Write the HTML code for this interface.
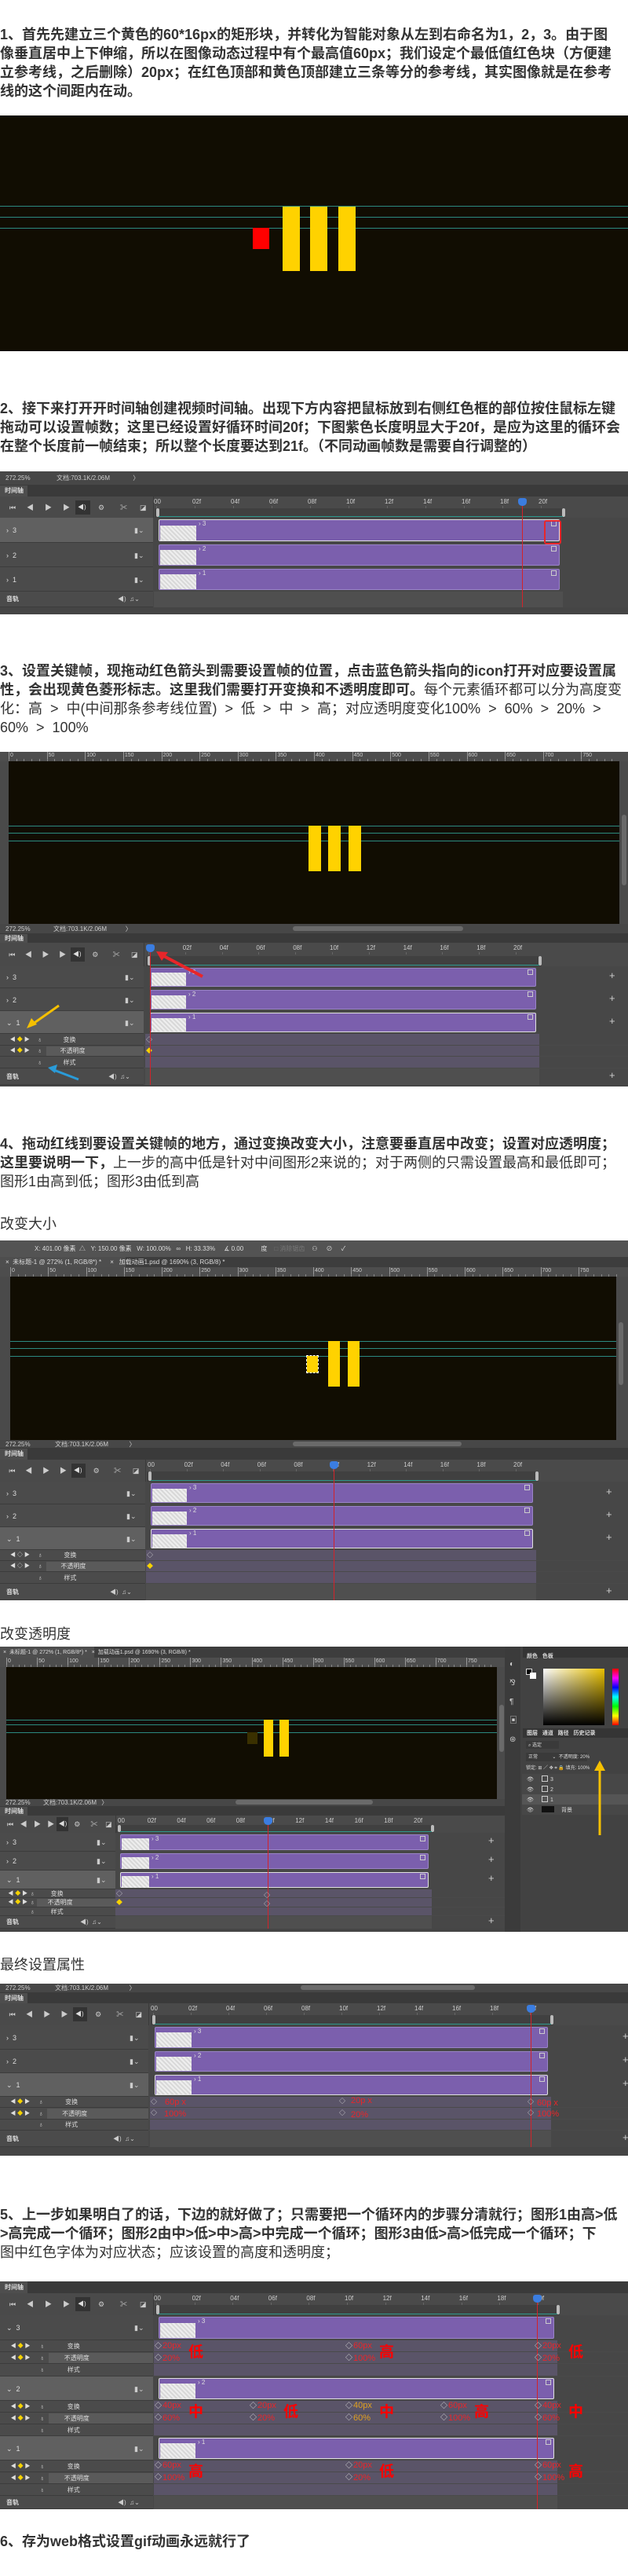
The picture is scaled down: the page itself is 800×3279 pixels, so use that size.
<!DOCTYPE html>
<html><head><meta charset="utf-8">
<style>
*{margin:0;padding:0;box-sizing:border-box}
body{width:800px;height:3279px;background:#fff;position:relative;overflow:hidden;font-family:"Liberation Sans","Noto Sans CJK SC",sans-serif}
.p{position:absolute;left:0;width:800px;font-size:18px;line-height:24px;color:#333;white-space:nowrap;letter-spacing:0}
.b{font-weight:bold}
.n{font-weight:normal}
.blk{position:absolute;overflow:hidden}
.t{position:absolute;font-size:8px;line-height:10px;color:#ddd;white-space:nowrap;font-family:"Liberation Sans","Noto Sans CJK SC",sans-serif}
.r{position:absolute;color:#e8262a;font-size:11px;line-height:12px;white-space:nowrap;font-family:"Liberation Sans","Noto Sans CJK SC",sans-serif}
.R{position:absolute;color:#ff0000;font-size:19px;font-weight:bold;line-height:20px;font-family:"Liberation Sans","Noto Sans CJK SC",sans-serif}
</style></head><body>

<div class="p b" style="top:32px">1、首先先建立三个黄色的60*16px的矩形块，并转化为智能对象从左到右命名为1，2，3。由于图<br>像垂直居中上下伸缩，所以在图像动态过程中有个最高值60px；我们设定个最低值红色块（方便建<br>立参考线，之后删除）20px；在红色顶部和黄色顶部建立三条等分的参考线，其实图像就是在参考<br>线的这个间距内在动。</div>

<div class="blk" style="top:147px;left:0;width:800px;height:300px;background:#110d02">
 <div style="position:absolute;left:0;top:115px;width:800px;height:1px;background:#2c8a80"></div>
 <div style="position:absolute;left:0;top:129px;width:800px;height:1px;background:#2c8a80"></div>
 <div style="position:absolute;left:0;top:143px;width:800px;height:1px;background:#2c8a80"></div>
 <div style="position:absolute;left:360px;top:116px;width:22px;height:82px;background:#ffd200"></div>
 <div style="position:absolute;left:395px;top:116px;width:22px;height:82px;background:#ffd200"></div>
 <div style="position:absolute;left:431px;top:116px;width:22px;height:82px;background:#ffd200"></div>
 <div style="position:absolute;left:322px;top:143px;width:21px;height:27px;background:#ff0000"></div>
</div>

<div class="p b" style="top:508px">2、接下来打开开时间轴创建视频时间轴。出现下方内容把鼠标放到右侧红色框的部位按住鼠标左键<br>拖动可以设置帧数；这里已经设置好循环时间20f；下图紫色长度明显大于20f，是应为这里的循环会<br>在整个长度前一帧结束；所以整个长度要达到21f。（不同动画帧数是需要自行调整的）</div>

<div class="p" style="top:842px"><span class="b">3、设置关键帧，现拖动红色箭头到需要设置帧的位置，点击蓝色箭头指向的icon打开对应要设置属<br>性，会出现黄色菱形标志。这里我们需要打开变换和不透明度即可。</span>每个元素循环都可以分为高度变<br>化：高 &nbsp;&gt;&nbsp; 中(中间那条参考线位置) &nbsp;&gt;&nbsp; 低 &nbsp;&gt;&nbsp; 中 &nbsp;&gt;&nbsp; 高；对应透明度变化100% &nbsp;&gt;&nbsp; 60% &nbsp;&gt;&nbsp; 20% &nbsp;&gt;<br>60% &nbsp;&gt;&nbsp; 100%</div>

<div class="p" style="top:1444px"><span class="b">4、拖动红线到要设置关键帧的地方，通过变换改变大小，注意要垂直居中改变；设置对应透明度；<br>这里要说明一下，</span>上一步的高中低是针对中间图形2来说的；对于两侧的只需设置最高和最低即可；<br>图形1由高到低；图形3由低到高</div>

<div class="p" style="top:1546px">改变大小</div>
<div class="p" style="top:2068px">改变透明度</div>
<div class="p" style="top:2489px">最终设置属性</div>

<div class="p" style="top:2807px"><span class="b">5、上一步如果明白了的话，下边的就好做了；只需要把一个循环内的步骤分清就行；图形1由高&gt;低<br>&gt;高完成一个循环；图形2由中&gt;低&gt;中&gt;高&gt;中完成一个循环；图形3由低&gt;高&gt;低完成一个循环；下<br></span>图中红色字体为对应状态；应该设置的高度和透明度；</div>

<div class="p b" style="top:3223px">6、存为web格式设置gif动画永远就行了</div>

<div id="root"></div>

<script>
const root=document.getElementById('root');
const box=(x,y,w,h,bg,ex='')=>`<div style="position:absolute;left:${x}px;top:${y}px;width:${w}px;height:${h}px;background:${bg};${ex}"></div>`;
const tx=(x,y,s,st='')=>`<div class="t" style="left:${x}px;top:${y}px;${st}">${s}</div>`;

function TL(top,o){
  const W=o.w||800,L=o.L;let h='',y=0;
  h+=box(0,0,W,o.H,'#454545');
  if(o.status){h+=box(0,0,W,o.status,'#474747');h+=box(0,o.status-1,W,1,'#3a3a3a');
    const ty=Math.max(0,o.status/2-5);
    h+=tx(7,ty,'272.25%','color:#ccc')+tx(o.docX||72,ty,'文档:703.1K/2.06M','color:#ccc')+tx((o.docX||72)*2.35,ty,'〉','color:#ccc');
    if(o.scroll)h+=box(o.scroll[0],ty+1,o.scroll[1]-o.scroll[0],6,'#6a6a6a','border-radius:3px');
    y+=o.status;}
  h+=box(0,y,W,o.tab,'#3a3a3a')+box(0,y,35,o.tab,'#4e4e4e')+tx(6,y+o.tab/2-5,'时间轴','font-weight:bold');
  y+=o.tab;const cy=y,ch=o.ctrl;
  h+=box(0,cy,W,ch,'#4a4a4a');
  const s=L/195;const ic=['⏮','◀','▶','▶','','⚙','✂','◪'];const ix=[12,34,57,80,0,125,153,178];
  h+=box(96*s,cy+ch/2-9,19*s,18,'#333')+tx(99*s,cy+ch/2-5,'◀)','font-size:8px');
  ic.forEach((c,i)=>{if(c)h+=tx(ix[i]*s,cy+ch/2-5,c,'font-size:9px;color:#ccc')});
  h+=box(L,cy,1,ch,'#3a3a3a');
  const labs=['00','02f','04f','06f','08f','10f','12f','14f','16f','18f','20f'];
  labs.forEach((l,i)=>{const x=o.r0+i*o.rs;h+=tx(x,cy+2,l,'font-size:8px;color:#ccc');h+=box(x+3,cy+12,1,3,'#666')});
  h+=box(o.bx0-5,cy+ch*0.55,o.bx1-o.bx0+12,ch*0.45,'#404040');
  h+=box(o.bx0-3,cy+ch*0.55,4,ch*0.4,'#bbb','border-radius:2px')+box(o.bx1+3,cy+ch*0.55,4,ch*0.4,'#bbb','border-radius:2px');
  h+=box(o.bx0,cy+ch-2,o.bx1-o.bx0+4,1,'#2f9a8e');
  y+=ch;
  o.rows.forEach(r=>{
    const rh=r.h;
    if(r.t=='tr'){
      h+=box(0,y,L,rh,r.sel?'#606060':'#4b4b4b')+box(L,y,W-L,rh,'#474747');
      h+=tx(8,y+rh/2-5,(r.exp?'⌄':'›')+'&nbsp; '+r.n,'font-size:9px');
      h+=tx(L-24,y+rh/2-5,'▮⌄','font-size:9px;color:#ccc');
      h+=box(o.bx0,y+2,o.bx1-o.bx0,rh-4,'#7b5fad',`border:1px solid ${r.sel?'#e0e0e0':'#9a84c8'};border-radius:2px`);
      const tw=Math.round((o.bx1-o.bx0)*0.09);
      h+=box(o.bx0+2,y+rh*0.3,tw,rh*0.6,'#e4e4e4','background-image:repeating-linear-gradient(45deg,#eee 0 2px,#d8d8d8 2px 4px)');
      h+=tx(o.bx0+tw+5,y+3,'›&nbsp;'+r.n,'font-size:8px');
      h+=box(o.bx1-11,y+4,7,7,'none','border:1px solid #ccc');
      if(o.plusX)h+=tx(o.plusX,y+rh/2-7,'+','font-size:13px;color:#ccc');
    }else if(r.t=='pr'){
      h+=box(0,y,L,rh,'#4b4b4b')+box(L,y,W-L,rh,'#474747');
      if(r.n=='不透明度')h+=box(L*0.32,y+1,L*0.68,rh-2,'#5a5a5a');
      if(r.n!='样式')h+=tx(L*0.07,y+rh/2-5,'◀ <span style="color:'+(o.yd?'#f5d200':'#ddd')+'">'+(o.yd?'◆':'◇')+'</span> ▶','font-size:7px');
      h+=tx(L*0.26,y+rh/2-5,'♁','font-size:8px');
      h+=tx(L*0.44-(r.n=='不透明度'?4:0),y+rh/2-5,r.n,'font-size:8px');
      h+=box(o.bx0-6,y,o.bx1-o.bx0+10,rh,'#5a5468');
      h+=box(L,y+rh-1,W-L,1,'#4a4a4a');
      if(r.n!='样式'&&o.d0)h+=tx(o.bx0-5,y+rh/2-5,r.n=='不透明度'?'<span style="color:#f5d200">◆</span>':'◇','font-size:8px');
    }else{
      h+=box(0,y,L,rh,'#4b4b4b')+box(L,y,W-L,rh,'#474747')+box(o.bx0-6,y,o.bx1-o.bx0+10,rh,'#4f4f4f');
      h+=tx(8,y+rh/2-5,'音轨','font-weight:bold');
      h+=tx(L-45,y+rh/2-5,'◀)&nbsp; ♫⌄','font-size:8px;color:#ccc');
      if(o.plusX)h+=tx(o.plusX,y+rh/2-7,'+','font-size:13px;color:#ccc');
    }
    h+=box(0,y+rh-1,L,1,'#3c3c3c');
    y+=rh;
  });
  h+=box(o.ph,cy+10,1,y-cy-10,'#d2232a');
  h+=box(o.ph-5,cy+2,11,10,'#3b7de0','border-radius:3px 3px 5px 5px');
  if(o.extra)h+=o.extra;
  const d=document.createElement('div');d.className='blk';
  d.style.cssText=`top:${top}px;left:${o.x||0}px;width:${W}px;height:${o.H}px;background:#3c3c3c`;
  d.innerHTML=h;root.appendChild(d);
}

function CV(top,o){
  let h='';
  h+=box(0,0,o.w,o.H,'#4a4a4a');
  h+=box(0,0,o.w,o.rh,'#4d4d4d');
  for(let i=0;i<16;i++){const x=o.x0+i*(o.x1-o.x0)/16;h+=box(x,0,1,o.rh,'#999')+tx(x+2,0,String(i*50),'font-size:7px;color:#ccc')}
  for(let x=o.x0;x<o.x1;x+=(o.x1-o.x0)/80)h+=box(x,o.rh-3,1,3,'#888');
  h+=box(o.x0,o.rh,o.x1-o.x0,o.H-o.rh,'#110d02');
  o.g.forEach(g=>h+=box(o.x0,g,o.x1-o.x0,1,'#2c8a80'));
  o.bars.forEach(b=>h+=box(b[0],b[1],b[2],b[3],b[4]||'#ffd200',b[5]||''));
  if(o.sb)h+=box(o.x1+3,o.sb[0],6,o.sb[1],'#6a6a6a','border-radius:3px');
  const d=document.createElement('div');d.className='blk';
  d.style.cssText=`top:${top}px;left:0;width:${o.w}px;height:${o.H}px`;
  d.innerHTML=h;root.appendChild(d);
}

/* A */
TL(600,{H:182,L:195,bx0:202,bx1:713,ph:665,r0:196,rs:49,status:18,tab:14,ctrl:27,docX:72,
 rows:[{t:'tr',n:'3',h:32,sel:1},{t:'tr',n:'2',h:31},{t:'tr',n:'1',h:31},{t:'au',h:20}],
 extra:box(693,62,22,31,'none','border:2px solid #e8262a;border-radius:3px')});

/* B */
CV(957,{w:800,H:219,rh:12,x0:11,x1:789,g:[94,103,113],sb:[80,90],
 bars:[[393,94,16,58],[418,94,16,58],[444,94,16,58]]});
TL(1176,{H:207,L:183,bx0:191,bx1:683,ph:191,r0:186,rs:46.8,status:13,tab:11,ctrl:30,docX:68,scroll:[373,590],plusX:776,yd:1,d0:1,
 rows:[{t:'tr',n:'3',h:28},{t:'tr',n:'2',h:29},{t:'tr',n:'1',h:29,sel:1,exp:1},{t:'pr',n:'变换',h:15},{t:'pr',n:'不透明度',h:14},{t:'pr',n:'样式',h:15},{t:'au',h:21}],
 extra:`<svg style="position:absolute;left:0;top:0" width="800" height="207"><path d="M258 67 L203 38" stroke="#e8262a" stroke-width="4"/><path d="M199 35 L214 36 L206 47 Z" fill="#e8262a"/><path d="M75 104 L38 130" stroke="#f5c000" stroke-width="3"/><path d="M34 133 L40 120 L47 128 Z" fill="#f5c000"/><path d="M100 198 L66 185" stroke="#2a9bd8" stroke-width="3"/><path d="M61 183 L73 179 L70 190 Z" fill="#2a9bd8"/></svg>`});

/* C */
(function(){
 const d=document.createElement('div');d.className='blk';d.style.cssText='top:1579px;left:0;width:800px;height:34px;background:#535353';
 d.innerHTML=box(0,21,800,13,'#3d3d3d')+tx(44,6,'X: 401.00 像素 &nbsp;△ &nbsp; Y: 150.00 像素 &nbsp; W: 100.00% &nbsp; ∞ &nbsp; H: 33.33% &nbsp; &nbsp; ∡ 0.00 &nbsp; &nbsp; &nbsp; &nbsp; &nbsp;度 &nbsp; &nbsp;<span style="color:#777">□ 消除锯齿</span> &nbsp; &nbsp;⚇ &nbsp; &nbsp; ⊘ &nbsp; &nbsp; ✓','font-size:8px;color:#ddd')
  +box(0,21,160,13,'#4e4e4e')+tx(7,23,'× &nbsp;未标题-1 @ 272% (1, RGB/8*) * &nbsp; &nbsp; × &nbsp; 加载动画1.psd @ 1690% (3, RGB/8) *','font-size:8px;color:#ddd');
 root.appendChild(d);
})();
CV(1613,{w:800,H:220,rh:12,x0:13,x1:785,g:[94,103,113],sb:[70,80],
 bars:[[391,113,14,21,'#ffd200','outline:1px dashed #fff'],[418,94,15,58],[443,94,15,58]]});
TL(1833,{H:204,L:185,bx0:192,bx1:679,ph:425,r0:188,rs:46.6,status:11,tab:14,ctrl:28,docX:70,scroll:[373,588],plusX:772,d0:1,
 rows:[{t:'tr',n:'3',h:29},{t:'tr',n:'2',h:29},{t:'tr',n:'1',h:29,sel:1,exp:1},{t:'pr',n:'变换',h:14},{t:'pr',n:'不透明度',h:14},{t:'pr',n:'样式',h:15},{t:'au',h:21}]});

/* D */
(function(){
 const d=document.createElement('div');d.className='blk';d.style.cssText='top:2096px;left:0;width:643px;height:14px;background:#3d3d3d';
 d.innerHTML=box(0,0,120,14,'#4e4e4e')+tx(4,3,'× &nbsp;未标题-1 @ 272% (1, RGB/8*) * &nbsp; × &nbsp;加载动画1.psd @ 1690% (3, RGB/8) *','font-size:7px');
 root.appendChild(d);
})();
CV(2110,{w:643,H:180,rh:12,x0:8,x1:633,g:[79,85,95],sb:[60,60],
 bars:[[336,79,12,47],[356,79,12,47],[315,95,13,15,'#3a3000']]});
TL(2290,{x:0,w:643,H:169,L:147,bx0:153,bx1:546,ph:341,r0:150,rs:37.7,status:10,tab:11,ctrl:22,docX:55,scroll:[300,475],plusX:622,yd:1,d0:1,
 rows:[{t:'tr',n:'3',h:24},{t:'tr',n:'2',h:24},{t:'tr',n:'1',h:24,sel:1,exp:1},{t:'pr',n:'变换',h:11},{t:'pr',n:'不透明度',h:12},{t:'pr',n:'样式',h:11},{t:'au',h:16}],
 extra:tx(336,118,'◇','font-size:8px')+tx(336,129,'◇','font-size:8px')});
(function(){
 const d=document.createElement('div');d.className='blk';d.style.cssText='top:2096px;left:643px;width:157px;height:363px;background:#424242';
 let h=box(0,0,20,363,'#3b3b3b');
 ['◐','⅋','¶','▣','⊛'].forEach((c,i)=>h+=tx(6,18+i*24,c,'font-size:10px;color:#ccc'));
 h+=box(23,0,134,14,'#353535')+tx(28,8,'颜色 &nbsp; 色板','font-weight:bold;font-size:7px');
 h+=box(27,28,8,8,'#000','border:1px solid #ddd')+box(32,33,8,8,'#fff');
 h+=box(49,28,78,72,'#fff','background:linear-gradient(to bottom,rgba(0,0,0,0),#000),linear-gradient(to right,#fff,#e8c000)');
 h+=box(137,28,8,72,'#f00','background:linear-gradient(to bottom,#f00,#f0f,#00f,#0ff,#0f0,#ff0,#f00)');
 h+=box(23,104,134,12,'#353535')+tx(28,106,'图层 &nbsp; 通道 &nbsp; 路径 &nbsp; 历史记录','font-size:7px;font-weight:bold');
 h+=box(27,120,42,10,'#3a3a3a')+tx(30,121,'⌕ 选定','font-size:6px');
 h+=box(27,135,78,11,'#3a3a3a')+tx(30,136,'正常 &nbsp; &nbsp; &nbsp; &nbsp; &nbsp; ⌄ &nbsp;不透明度: 20%','font-size:6px');
 h+=tx(27,150,'锁定: ⊞ ／ ✥ ⌗ 🔒 填充: 100%','font-size:6px');
 [['3',165],['2',178],['1',191],['背景',204]].forEach((r,i)=>{h+=box(22,r[1]-3,135,13,i==2?'#555':'#474747')+tx(28,r[1],'👁','font-size:7px')+box(47,r[1]-1,i==3?16:8,8,i==3?'#111':'none',i==3?'':'border:1px solid #ccc')+tx(i==3?72:58,r[1],r[0],'font-size:7px')});
 h+=`<svg style="position:absolute;left:0;top:0" width="157" height="363"><path d="M121 240 L121 155" stroke="#f5c000" stroke-width="3"/><path d="M114 158 L121 145 L128 158 Z" fill="#f5c000"/></svg>`;
 d.innerHTML=h;root.appendChild(d);
})();

/* E */
const rv=(x,y,s)=>`<div class="r" style="left:${x}px;top:${y}px">${s}</div>`;
TL(2525,{H:219,L:189,bx0:197,bx1:698,ph:676,r0:192,rs:48,status:12,tab:13,ctrl:28,docX:70,scroll:[383,605],plusX:793,yd:1,
 rows:[{t:'tr',n:'3',h:31},{t:'tr',n:'2',h:30},{t:'tr',n:'1',h:30,sel:1,exp:1},{t:'pr',n:'变换',h:14},{t:'pr',n:'不透明度',h:15},{t:'pr',n:'样式',h:14},{t:'au',h:21}],
 extra:tx(192,146,'◇','font-size:8px')+tx(192,160,'◇','font-size:8px')+tx(432,145,'◇','font-size:8px')+tx(432,160,'◇','font-size:8px')+tx(672,146,'◇','font-size:8px')+tx(672,160,'◇','font-size:8px')
  +rv(210,145,'60p x')+rv(447,143,'20p x')+rv(684,146,'60p x')+rv(209,160,'100%')+rv(447,161,'20%')+rv(684,160,'100%')});

/* F */
let fx='';
const dm=(x,y)=>tx(x,y,'◇','font-size:9px');
const cols=[199,320,442,563,683];
const F=[
 [79,[[0,'20px','20%','低'],[2,'60px','100%','高'],[4,'20px','20%','低']]],
 [155,[[0,'40px','60%','中'],[1,'20px','20%','低'],[2,'40px','60%','中',1],[3,'60px','100%','高'],[4,'40px','60%','中']]],
 [231,[[0,'60px','100%','高'],[2,'20px','20%','低'],[4,'60px','100%','高']]]];
F.forEach(g=>{const y=g[0];g[1].forEach(c=>{const x=cols[c[0]];
 fx+=dm(x-2,y-2)+dm(x-2,y+13)+`<div class="r" style="left:${x+8}px;top:${y-3}px;${c[4]?'color:#e0a020':''}">${c[1]}</div><div class="r" style="left:${x+8}px;top:${y+13}px;${c[4]?'color:#e0a020':''}">${c[2]}</div><div class="R" style="left:${x+41}px;top:${y+2}px">${c[3]}</div>`;})});
TL(2904,{H:290,L:195,bx0:202,bx1:706,ph:684,r0:196,rs:48.6,status:0,tab:15,ctrl:28,yd:1,
 rows:[{t:'tr',n:'3',h:32,exp:1},{t:'pr',n:'变换',h:15},{t:'pr',n:'不透明度',h:15},{t:'pr',n:'样式',h:16},
  {t:'tr',n:'2',h:31,sel:1,exp:1},{t:'pr',n:'变换',h:15},{t:'pr',n:'不透明度',h:15},{t:'pr',n:'样式',h:15},
  {t:'tr',n:'1',h:31,sel:1,exp:1},{t:'pr',n:'变换',h:15},{t:'pr',n:'不透明度',h:15},{t:'pr',n:'样式',h:15},{t:'au',h:17}],
 extra:fx});
</script>
</body></html>
